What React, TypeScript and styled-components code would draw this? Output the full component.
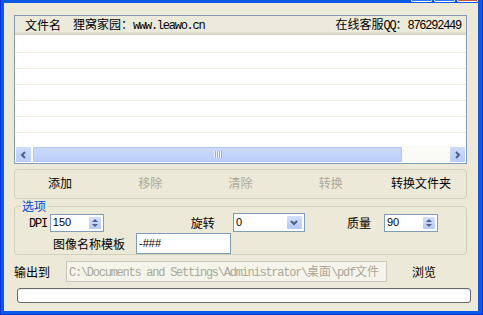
import React from "react";
import styled, { createGlobalStyle } from "styled-components";

const Global = createGlobalStyle`
  html, body { margin: 0; padding: 0; background: #0A5AE6; }
  body { font-family: "Noto Sans CJK SC", "Liberation Sans", sans-serif; font-size: 12px; color: #000; }
  * { box-sizing: border-box; }
`;

const Frame = styled.div`
  position: relative;
  width: 483px;
  height: 315px;
  display: flex;
  background: #0A5AE6;
  border-left: 1px solid #0831D9;
  border-right: 1px solid #0831D9;
  border-bottom: 1px solid #0831D9;
  padding: 3px 4px 3px 3px;
`;

const CaptionButtons = styled.div`
  position: absolute;
  top: 0;
  right: 4px;
  display: flex;
  gap: 2px;
`;

const CaptionButton = styled.div<{ $close?: boolean }>`
  width: 21px;
  height: 2px;
  background: ${(p) => (p.$close ? "#C8533B" : "#2E74F4")};
  border: 1px solid #fff;
  border-top: none;
  border-radius: 0 0 3px 3px;
`;

const Client = styled.div`
  flex: 1;
  background: #ECE9D8;
  display: flex;
  flex-direction: column;
  padding-top: 12px;
`;

const Mono = styled.span`
  font-family: "Liberation Mono", "DejaVu Sans Mono", monospace;
  letter-spacing: -1.25px;
`;

const ListBox = styled.div`
  margin-left: 10px;
  width: 453px;
  height: 149px;
  border: 1px solid #7F9DB9;
  background: #fff;
  display: flex;
  flex-direction: column;
`;

const Header = styled.div`
  height: 19px;
  display: flex;
  align-items: center;
  padding: 0 5px 0 10px;
  background: #EBEADB;
  border-bottom: 1px solid #D6D2C2;
  box-shadow: inset 0 -2px 0 #E2DECD;
  line-height: 12px;
  white-space: nowrap;
`;

const HeaderCell = styled.span<{ $gap?: number; $right?: boolean }>`
  margin-left: ${(p) => p.$gap ?? 0}px;
  ${(p) => (p.$right ? "margin-left: auto;" : "")}
`;

const Rows = styled.div`
  flex: 1;
  background: repeating-linear-gradient(to bottom, #fff 0 15px, #F0EEE2 15px 16px);
  background-position: 0 2px;
`;

const HScroll = styled.div`
  height: 17px;
  display: flex;
  background: #FAFAF6;
`;

const ScrollBtn = styled.div`
  width: 17px;
  height: 17px;
  background: linear-gradient(to bottom, #CDDBFB, #B9CDF8);
  border: 1px solid #fff;
  border-radius: 2px;
  display: flex;
  align-items: center;
  justify-content: center;
`;

const Thumb = styled.div`
  width: 371px;
  height: 17px;
  background: linear-gradient(to bottom, #CCDBFD, #BACEF8);
  border: 1px solid #fff;
  outline: 1px solid #B0C6F3;
  outline-offset: -2px;
  border-radius: 2px;
  display: flex;
  align-items: center;
  justify-content: center;
`;

const Track = styled.div`
  flex: 1;
`;

const ButtonGroup = styled.div`
  margin: 5px 0 0 10px;
  width: 453px;
  height: 30px;
  border: 1px solid #D0D0BF;
  border-radius: 4px;
  display: grid;
  grid-template-columns: repeat(5, 1fr);
  align-items: center;
`;

const FlatButton = styled.div<{ $disabled?: boolean }>`
  text-align: center;
  color: ${(p) => (p.$disabled ? "#ACA899" : "#000")};
  line-height: 14px;
  margin-top: -2px;
`;

const Options = styled.fieldset`
  margin: 1px 0 0 10px;
  width: 453px;
  padding: 0;
  border: 1px solid #D0D0BF;
  border-radius: 4px;
  min-inline-size: 0;
`;

const Legend = styled.legend`
  color: #0046D5;
  padding: 0 1px;
  margin-left: 6px;
  line-height: 12px;
  font-size: 12px;
`;

const Row = styled.div<{ $pl: number; $mt: number }>`
  display: flex;
  align-items: center;
  padding-left: ${(p) => p.$pl}px;
  margin-top: ${(p) => p.$mt}px;
`;

const Label = styled.span<{ $ml?: number; $w?: number }>`
  margin-left: ${(p) => p.$ml ?? 0}px;
  ${(p) => (p.$w ? `width: ${p.$w}px;` : "")}
  white-space: nowrap;
  line-height: 14px;
`;

const Field = styled.div<{ $ml?: number; $w: number; $h: number; $disabled?: boolean }>`
  margin-left: ${(p) => p.$ml ?? 0}px;
  width: ${(p) => p.$w}px;
  height: ${(p) => p.$h}px;
  border: 1px solid ${(p) => (p.$disabled ? "#C9C7BA" : "#7F9DB9")};
  background: ${(p) => (p.$disabled ? "#F5F4EA" : "#fff")};
  display: flex;
  align-items: center;
  padding: 1px 1px 1px 2px;
`;

const FieldText = styled.span`
  flex: 1;
  font-family: "Liberation Sans", Arial, sans-serif;
  font-size: 11px;
  line-height: 13px;
`;

const PathText = styled.span`
  flex: 1;
  color: #ACA899;
  white-space: nowrap;
  line-height: 14px;
`;

const SpinButtons = styled.div`
  width: 14px;
  height: 100%;
  display: flex;
  flex-direction: column;
  background: linear-gradient(to bottom, #D3DEFB, #B6CAF7);
  border: 1px solid #fff;
  border-radius: 2px;
  align-items: center;
  justify-content: center;
`;

const DropButton = styled.div`
  width: 17px;
  height: 100%;
  background: linear-gradient(to bottom, #D3DEFB, #B6CAF7);
  border: 1px solid #fff;
  border-radius: 2px;
  display: flex;
  align-items: center;
  justify-content: center;
`;

const OutputRow = styled.div`
  display: flex;
  align-items: center;
  margin-top: 6px;
  padding-left: 10px;
`;

const Progress = styled.div`
  margin: 6px 0 0 13px;
  width: 454px;
  height: 15px;
  border: 1px solid #686868;
  border-radius: 3px;
  background: #fff;
  box-shadow: inset 0 1px 0 #EEE;
`;

const Chevron = ({ dir }: { dir: "left" | "right" | "down" }) => {
  const d =
    dir === "left"
      ? "M5 1 L2 4 L5 7"
      : dir === "right"
      ? "M2 1 L5 4 L2 7"
      : "M1 2 L4 5 L7 2";
  return (
    <svg width={dir === "down" ? 8 : 7} height={8} viewBox={dir === "down" ? "0 0 8 8" : "0 0 7 8"}>
      <path d={d} fill="none" stroke="#4D6185" strokeWidth={2} />
    </svg>
  );
};

const SpinArrows = () => (
  <svg width="8" height="12" viewBox="0 0 8 12">
    <path d="M1 5 L4 2 L7 5 Z" fill="#4D6185" />
    <path d="M1 7 L4 10 L7 7 Z" fill="#4D6185" />
  </svg>
);

const Grip = () => (
  <svg width="8" height="7" viewBox="0 0 8 7">
    {[0, 2, 4, 6].map((x) => (
      <rect key={x} x={x} y={0} width={1} height={7} fill="#EEF4FE" />
    ))}
    {[1, 3, 5, 7].map((x) => (
      <rect key={x} x={x} y={0} width={1} height={7} fill="#8CB0F8" />
    ))}
  </svg>
);

export default function App() {
  return (
    <Frame>
      <Global />
      <CaptionButtons>
        <CaptionButton />
        <CaptionButton />
        <CaptionButton $close />
      </CaptionButtons>
      <Client>
        <ListBox>
          <Header>
            <HeaderCell>文件名</HeaderCell>
            <HeaderCell $gap={12}>
              狸窝家园：<Mono>www.leawo.cn</Mono>
            </HeaderCell>
            <HeaderCell $right>
              在线客服<Mono>QQ</Mono>：<Mono>876292449</Mono>
            </HeaderCell>
          </Header>
          <Rows />
          <HScroll>
            <ScrollBtn>
              <Chevron dir="left" />
            </ScrollBtn>
            <Thumb>
              <Grip />
            </Thumb>
            <Track />
            <ScrollBtn>
              <Chevron dir="right" />
            </ScrollBtn>
          </HScroll>
        </ListBox>

        <ButtonGroup>
          <FlatButton>添加</FlatButton>
          <FlatButton $disabled>移除</FlatButton>
          <FlatButton $disabled>清除</FlatButton>
          <FlatButton $disabled>转换</FlatButton>
          <FlatButton>转换文件夹</FlatButton>
        </ButtonGroup>

        <Options>
          <Legend>选项</Legend>
          <Row $pl={14} $mt={1}>
            <Label>
              <Mono>DPI</Mono>
            </Label>
            <Field $ml={3} $w={54} $h={18}>
              <FieldText>150</FieldText>
              <SpinButtons>
                <SpinArrows />
              </SpinButtons>
            </Field>
            <Label $ml={87}>旋转</Label>
            <Field $ml={18} $w={72} $h={19}>
              <FieldText>0</FieldText>
              <DropButton>
                <Chevron dir="down" />
              </DropButton>
            </Field>
            <Label $ml={42}>质量</Label>
            <Field $ml={13} $w={54} $h={18}>
              <FieldText>90</FieldText>
              <SpinButtons>
                <SpinArrows />
              </SpinButtons>
            </Field>
          </Row>
          <Row $pl={38} $mt={1}>
            <Label $w={72}>图像名称模板</Label>
            <Field $ml={11} $w={95} $h={21}>
              <FieldText>-###</FieldText>
            </Field>
          </Row>
        </Options>

        <OutputRow>
          <Label $w={52}>输出到</Label>
          <Field $w={321} $h={21} $disabled>
            <PathText>
              <Mono>C:\Documents and Settings\Administrator\</Mono>桌面<Mono>\pdf</Mono>文件
            </PathText>
          </Field>
          <Label $ml={25}>浏览</Label>
        </OutputRow>

        <Progress />
      </Client>
    </Frame>
  );
}
